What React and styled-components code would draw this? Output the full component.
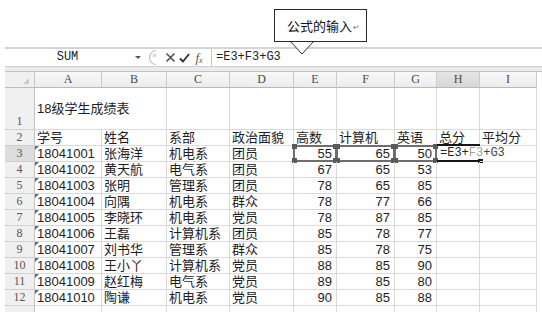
import React from "react";
import styled, { createGlobalStyle } from "styled-components";

const GlobalStyle = createGlobalStyle`
  html, body { margin: 0; padding: 0; background: #fff; }
  body { font-family: "Liberation Sans", "Noto Sans CJK SC", sans-serif; }
`;

const COLS = ["A", "B", "C", "D", "E", "F", "G", "H", "I"];
const HEADS = ["学号", "姓名", "系部", "政治面貌", "高数", "计算机", "英语", "总分", "平均分"];
const DATA = [
  ["18041001", "张海洋", "机电系", "团员", "55", "65", "50"],
  ["18041002", "黄天航", "电气系", "团员", "67", "65", "53"],
  ["18041003", "张明", "管理系", "团员", "78", "65", "85"],
  ["18041004", "向隅", "机电系", "群众", "78", "77", "66"],
  ["18041005", "李晓环", "机电系", "党员", "78", "87", "85"],
  ["18041006", "王磊", "计算机系", "团员", "85", "78", "77"],
  ["18041007", "刘书华", "管理系", "群众", "85", "78", "75"],
  ["18041008", "王小丫", "计算机系", "党员", "88", "85", "90"],
  ["18041009", "赵红梅", "电气系", "党员", "89", "85", "80"],
  ["18041010", "陶谦", "机电系", "党员", "90", "85", "88"],
];

const Page = styled.div`
  width: 542px;
  height: 312px;
  overflow: hidden;
  background: #fff;
`;

const CalloutRow = styled.div`
  height: 47px;
  box-sizing: border-box;
  padding: 9px 0 0 274px;
  position: relative;
  z-index: 2;
`;

const Callout = styled.div`
  position: relative;
  width: 93px;
  height: 33px;
  box-sizing: border-box;
  border: 1px solid #2a2a2a;
  background: #fff;
  display: flex;
  align-items: center;
  padding-left: 12px;
  font-family: "Noto Sans CJK SC", sans-serif;
  font-size: 13px;
  color: #111;
`;

const ReturnMark = styled.span`
  font-family: "DejaVu Sans", sans-serif;
  font-size: 8px;
  color: #777;
  margin-left: 1px;
  position: relative;
  top: 2px;
`;

const Tail = styled.svg`
  position: absolute;
  left: 15px;
  top: 31px;
  overflow: visible;
`;

const Sheet = styled.div`
  margin-left: 5px;
  width: 537px;
`;

const FormulaBar = styled.div`
  height: 19px;
  box-sizing: border-box;
  border-top: 2px solid #d4d4d4;
  background: #fff;
  display: flex;
  align-items: center;
`;

const NameBox = styled.div`
  width: 125px;
  text-align: center;
  font: 12px/17px "Liberation Mono", monospace;
  color: #222;
`;

const DropArrow = styled.div`
  width: 16px;
  display: flex;
  justify-content: center;
  &::after {
    content: "";
    border-left: 3px solid transparent;
    border-right: 3px solid transparent;
    border-top: 3px solid #555;
  }
`;

const ToolIcon = styled.div`
  width: ${p => p.$w}px;
  height: 17px;
  display: flex;
  align-items: center;
  justify-content: center;
`;

const FxLabel = styled.span`
  font-family: "Liberation Serif", serif;
  font-style: italic;
  font-size: 13px;
  color: #555;
  & > sub {
    font-size: 8px;
    vertical-align: -1px;
  }
`;

const BarDivider = styled.div`
  width: 1px;
  height: 17px;
  margin-left: 3px;
  background: #c8c8c8;
`;

const FormulaText = styled.div`
  padding-left: 4px;
  font: 12px/17px "Liberation Mono", monospace;
  color: #222;
`;

const Splitter = styled.div`
  height: 4px;
  background: #ebebeb;
  border-top: 1px solid #cdcdcd;
  border-bottom: 1px solid #c4c4c4;
`;

const Grid = styled.div`
  display: grid;
  grid-template-columns: 30px 67px 65px 63px 64px 43px 58px 42px 43px 57px;
  grid-template-rows: 16px 42px repeat(12, 16px);
`;

const Corner = styled.div`
  background: #f0f0f0;
  border-right: 1px solid #c6c6c6;
  border-bottom: 1px solid #bcbcbc;
  box-sizing: border-box;
  display: flex;
  align-items: flex-end;
  justify-content: flex-end;
  padding: 0 5px 3px 0;
  &::after {
    content: "";
    border-left: 6px solid transparent;
    border-bottom: 6px solid #cbcbcb;
  }
`;

const ColHead = styled.div`
  box-sizing: border-box;
  background: ${p => (p.$active ? "linear-gradient(#e4e4e4, #d8d8d8)" : "linear-gradient(#f8f8f8, #ececec)")};
  border-right: 1px solid #cbcbcb;
  border-bottom: 1px solid #b8b8b8;
  text-align: center;
  font: 12px/15px "Liberation Serif", serif;
  color: #4a4a4a;
`;

const RowHead = styled.div`
  box-sizing: border-box;
  background: ${p => (p.$active ? "#dcdcdc" : "#f0f0f0")};
  border-right: 1px solid #c2c2c2;
  border-bottom: 1px solid #d0d0d0;
  display: flex;
  align-items: flex-end;
  justify-content: center;
  font: 12px/15px "Liberation Serif", serif;
  color: #555;
`;

const Cell = styled.div`
  position: relative;
  box-sizing: border-box;
  min-width: 0;
  border-right: ${p => (p.$open ? "none" : "1px solid #dadada")};
  border-bottom: 1px solid #dadada;
  display: flex;
  align-items: ${p => (p.$middle ? "center" : "flex-end")};
  justify-content: ${p => (p.$num ? "flex-end" : "flex-start")};
  padding: 0 4px 0 2px;
  font-size: 13px;
  line-height: 15px;
  color: #1e1e1e;
  white-space: nowrap;
  &::before {
    content: "";
    display: ${p => (p.$flag ? "block" : "none")};
    position: absolute;
    left: 0;
    top: 0;
    border-top: 4px solid #6a6a6a;
    border-right: 4px solid transparent;
  }
`;

const RefFrame = styled.div`
  position: absolute;
  top: -1px;
  left: -1px;
  right: -1px;
  bottom: -1px;
  border: 2px solid #6e6e6e;
`;

const Handle = styled.span`
  position: absolute;
  width: 5px;
  height: 5px;
  background: #5a5a5a;
  ${p => (p.$top ? "top: -3px;" : "bottom: -3px;")}
  ${p => (p.$left ? "left: -3px;" : "right: -3px;")}
`;

const ActiveFrame = styled.div`
  position: absolute;
  top: -2px;
  left: 0;
  right: 0;
  bottom: -1px;
  border-top: 2px solid #151515;
  border-bottom: 2px solid #151515;
  &::after {
    content: "";
    position: absolute;
    right: -3px;
    bottom: -3px;
    width: 5px;
    height: 4px;
    background: #151515;
  }
`;

const Ref = styled.span`
  color: ${p => p.$tone};
`;

const FormulaCell = styled.span`
  font: 12px/15px "Liberation Mono", monospace;
  margin-left: 1px;
`;

const Frame = () => (
  <RefFrame>
    <Handle $top $left />
    <Handle $top />
    <Handle $left />
    <Handle />
  </RefFrame>
);

const Grip = () => (
  <svg width="16" height="17" viewBox="0 0 16 17">
    <path d="M10 1.5 A6.5 7 0 0 0 10 15.5" fill="none" stroke="#c4c4c4" strokeWidth="1.2" />
    <circle cx="8.5" cy="6.5" r="2" fill="#dcdcdc" />
  </svg>
);

const CrossIcon = () => (
  <svg width="9" height="9" viewBox="0 0 9 9">
    <path d="M1 1 L8 8 M8 1 L1 8" stroke="#555" strokeWidth="1.7" strokeLinecap="round" />
  </svg>
);

const CheckIcon = () => (
  <svg width="11" height="10" viewBox="0 0 11 10">
    <path d="M1 5.5 L4 8.5 L10 1" fill="none" stroke="#333" strokeWidth="1.9" strokeLinejoin="round" />
  </svg>
);

const App = () => (
  <Page>
    <GlobalStyle />
    <CalloutRow>
      <Callout>
        公式的输入<ReturnMark>↵</ReturnMark>
        <Tail width="24" height="14" viewBox="0 0 24 14">
          <polygon points="1,1 12,13 23,1" fill="#fff" />
          <polyline points="0.5,0.5 12,13 23.5,0.5" fill="none" stroke="#2a2a2a" strokeWidth="1" />
        </Tail>
      </Callout>
    </CalloutRow>
    <Sheet>
      <FormulaBar>
        <NameBox>SUM</NameBox>
        <DropArrow />
        <Grip />
        <ToolIcon $w={16}><CrossIcon /></ToolIcon>
        <ToolIcon $w={12}><CheckIcon /></ToolIcon>
        <ToolIcon $w={18}><FxLabel>f<sub>x</sub></FxLabel></ToolIcon>
        <BarDivider />
        <FormulaText>=E3+F3+G3</FormulaText>
      </FormulaBar>
      <Splitter />
      <Grid>
        <Corner />
        {COLS.map(c => (
          <ColHead key={c} $active={c === "H"}>{c}</ColHead>
        ))}

        <RowHead>1</RowHead>
        <Cell $middle $open>18级学生成绩表</Cell>
        {COLS.slice(1).map(c => <Cell key={c} />)}

        <RowHead>2</RowHead>
        {HEADS.map(h => <Cell key={h}>{h}</Cell>)}

        {DATA.map((r, i) => {
          const n = i + 3;
          const first = n === 3;
          return (
            <React.Fragment key={n}>
              <RowHead $active={first}>{n}</RowHead>
              <Cell $flag>{r[0]}</Cell>
              <Cell>{r[1]}</Cell>
              <Cell>{r[2]}</Cell>
              <Cell>{r[3]}</Cell>
              {r.slice(4).map((v, j) => (
                <Cell key={j} $num>
                  {v}
                  {first && <Frame />}
                </Cell>
              ))}
              {first ? (
                <Cell $open>
                  <FormulaCell>
                    <Ref $tone="#222">=E3+</Ref>
                    <Ref $tone="#a0a0a0">F3</Ref>
                    <Ref $tone="#444">+G3</Ref>
                  </FormulaCell>
                  <ActiveFrame />
                </Cell>
              ) : (
                <Cell />
              )}
              <Cell />
            </React.Fragment>
          );
        })}

        <RowHead />
        {COLS.map(c => <Cell key={c} />)}
      </Grid>
    </Sheet>
  </Page>
);

export default App;
